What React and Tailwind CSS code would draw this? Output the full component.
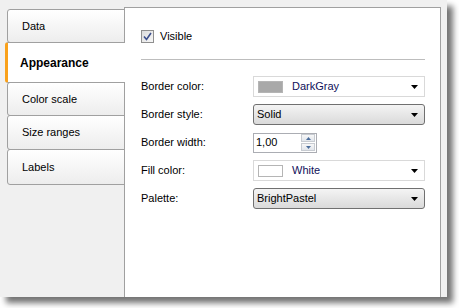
import React from 'react';

const tabs = [
  { label: 'Data', h: 'h-[34px]' },
  { label: 'Appearance', h: 'h-[41px]', active: true },
  { label: 'Color scale', h: 'h-[34px]' },
  { label: 'Size ranges', h: 'h-[35px]' },
  { label: 'Labels', h: 'h-[36px]' },
];

const Arrow = () => (
  <svg width="7" height="4" viewBox="0 0 7 4" className="shrink-0">
    <path d="M0 0h7L3.5 4z" fill="#000" />
  </svg>
);

const ColorCombo = ({ swatch, text }) => (
  <div className="w-[172px] h-[21px] flex items-center bg-white border border-[#d9d9d9] pl-[4px] pr-[6px]">
    <div className="w-[25px] h-[12px] border border-[#b5b5b5]" style={{ background: swatch }} />
    <span className="ml-[9px] flex-1 text-[#10105a]">{text}</span>
    <Arrow />
  </div>
);

const Combo = ({ text }) => (
  <div className="w-[172px] h-[21px] flex items-center rounded-[3px] border border-[#707070] bg-gradient-to-b from-[#f4f4f4] to-[#dadada] pl-[3px] pr-[6px]">
    <span className="flex-1">{text}</span>
    <Arrow />
  </div>
);

const Spin = () => (
  <div className="w-[64px] h-[20px] flex items-center bg-white border border-[#abadb3] pl-[2px] pr-px">
    <span className="flex-1">1,00</span>
    <div className="flex flex-col gap-px">
      <div className="w-[14px] h-[8px] flex items-center justify-center border border-[#c7cbd1] bg-gradient-to-b from-[#f7f7f7] to-[#e2e6ec]">
        <svg width="5" height="3" viewBox="0 0 5 3"><path d="M0 3h5L2.5 0z" fill="#4b6d9b" /></svg>
      </div>
      <div className="w-[14px] h-[8px] flex items-center justify-center border border-[#c7cbd1] bg-gradient-to-b from-[#f7f7f7] to-[#e2e6ec]">
        <svg width="5" height="3" viewBox="0 0 5 3"><path d="M0 0h5L2.5 3z" fill="#4b6d9b" /></svg>
      </div>
    </div>
  </div>
);

const rows = [
  { label: 'Border color:', control: <ColorCombo swatch="#a9a9a9" text="DarkGray" /> },
  { label: 'Border style:', control: <Combo text="Solid" /> },
  { label: 'Border width:', control: <Spin /> },
  { label: 'Fill color:', control: <ColorCombo swatch="#ffffff" text="White" /> },
  { label: 'Palette:', control: <Combo text="BrightPastel" /> },
];

export default function App() {
  return (
    <div className="w-[459px] h-[308px] bg-white text-[11px] text-black" style={{ fontFamily: '"Liberation Sans", Arial, sans-serif' }}>
      <div className="w-[447px] h-[297px] bg-[#f0f0f0] pt-[7px] flex shadow-[6px_6px_6px_rgba(0,0,0,0.55)]">
        <div className="w-[118px] ml-[7px] -mr-px pt-[2px] z-10 flex flex-col">
          {tabs.map((t, i) =>
            t.active ? (
              <div
                key={t.label}
                className={`${t.h} -mt-px -ml-[2px] pl-[12px] flex items-center bg-white border-y border-[#a0a0a0] border-l-[3px] border-l-[#f9a11b] rounded-l-[3px] font-bold text-[12px]`}
              >
                {t.label}
              </div>
            ) : (
              <div
                key={t.label}
                className={`${t.h} ${i === 0 ? '' : '-mt-px'} pl-[14px] flex items-center border border-[#a0a0a0] rounded-l-[3px] bg-gradient-to-b from-white to-[#ededed]`}
              >
                {t.label}
              </div>
            )
          )}
        </div>
        <div className="w-[317px] bg-white border-x border-t border-[#a0a0a0] pl-[16px] pr-[15px] pt-[22px]">
          <div className="flex items-center h-[13px]">
            <div className="w-[13px] h-[13px] border border-[#8f8f8f] bg-gradient-to-br from-[#dcdcdc] to-[#f7f7f7] flex items-center justify-center">
              <svg width="9" height="9" viewBox="0 0 9 9">
                <path d="M1 4.5l2.5 3L8 1" fill="none" stroke="#3c4f8c" strokeWidth="1.6" />
              </svg>
            </div>
            <span className="ml-[6px]">Visible</span>
          </div>
          <div className="h-px bg-[#bdbdbd] mt-[16px]" />
          <div className="mt-[16px] flex flex-col gap-[7px]">
            {rows.map((r) => (
              <div key={r.label} className="flex items-center h-[21px]">
                <span className="w-[112px]">{r.label}</span>
                {r.control}
              </div>
            ))}
          </div>
        </div>
      </div>
    </div>
  );
}
